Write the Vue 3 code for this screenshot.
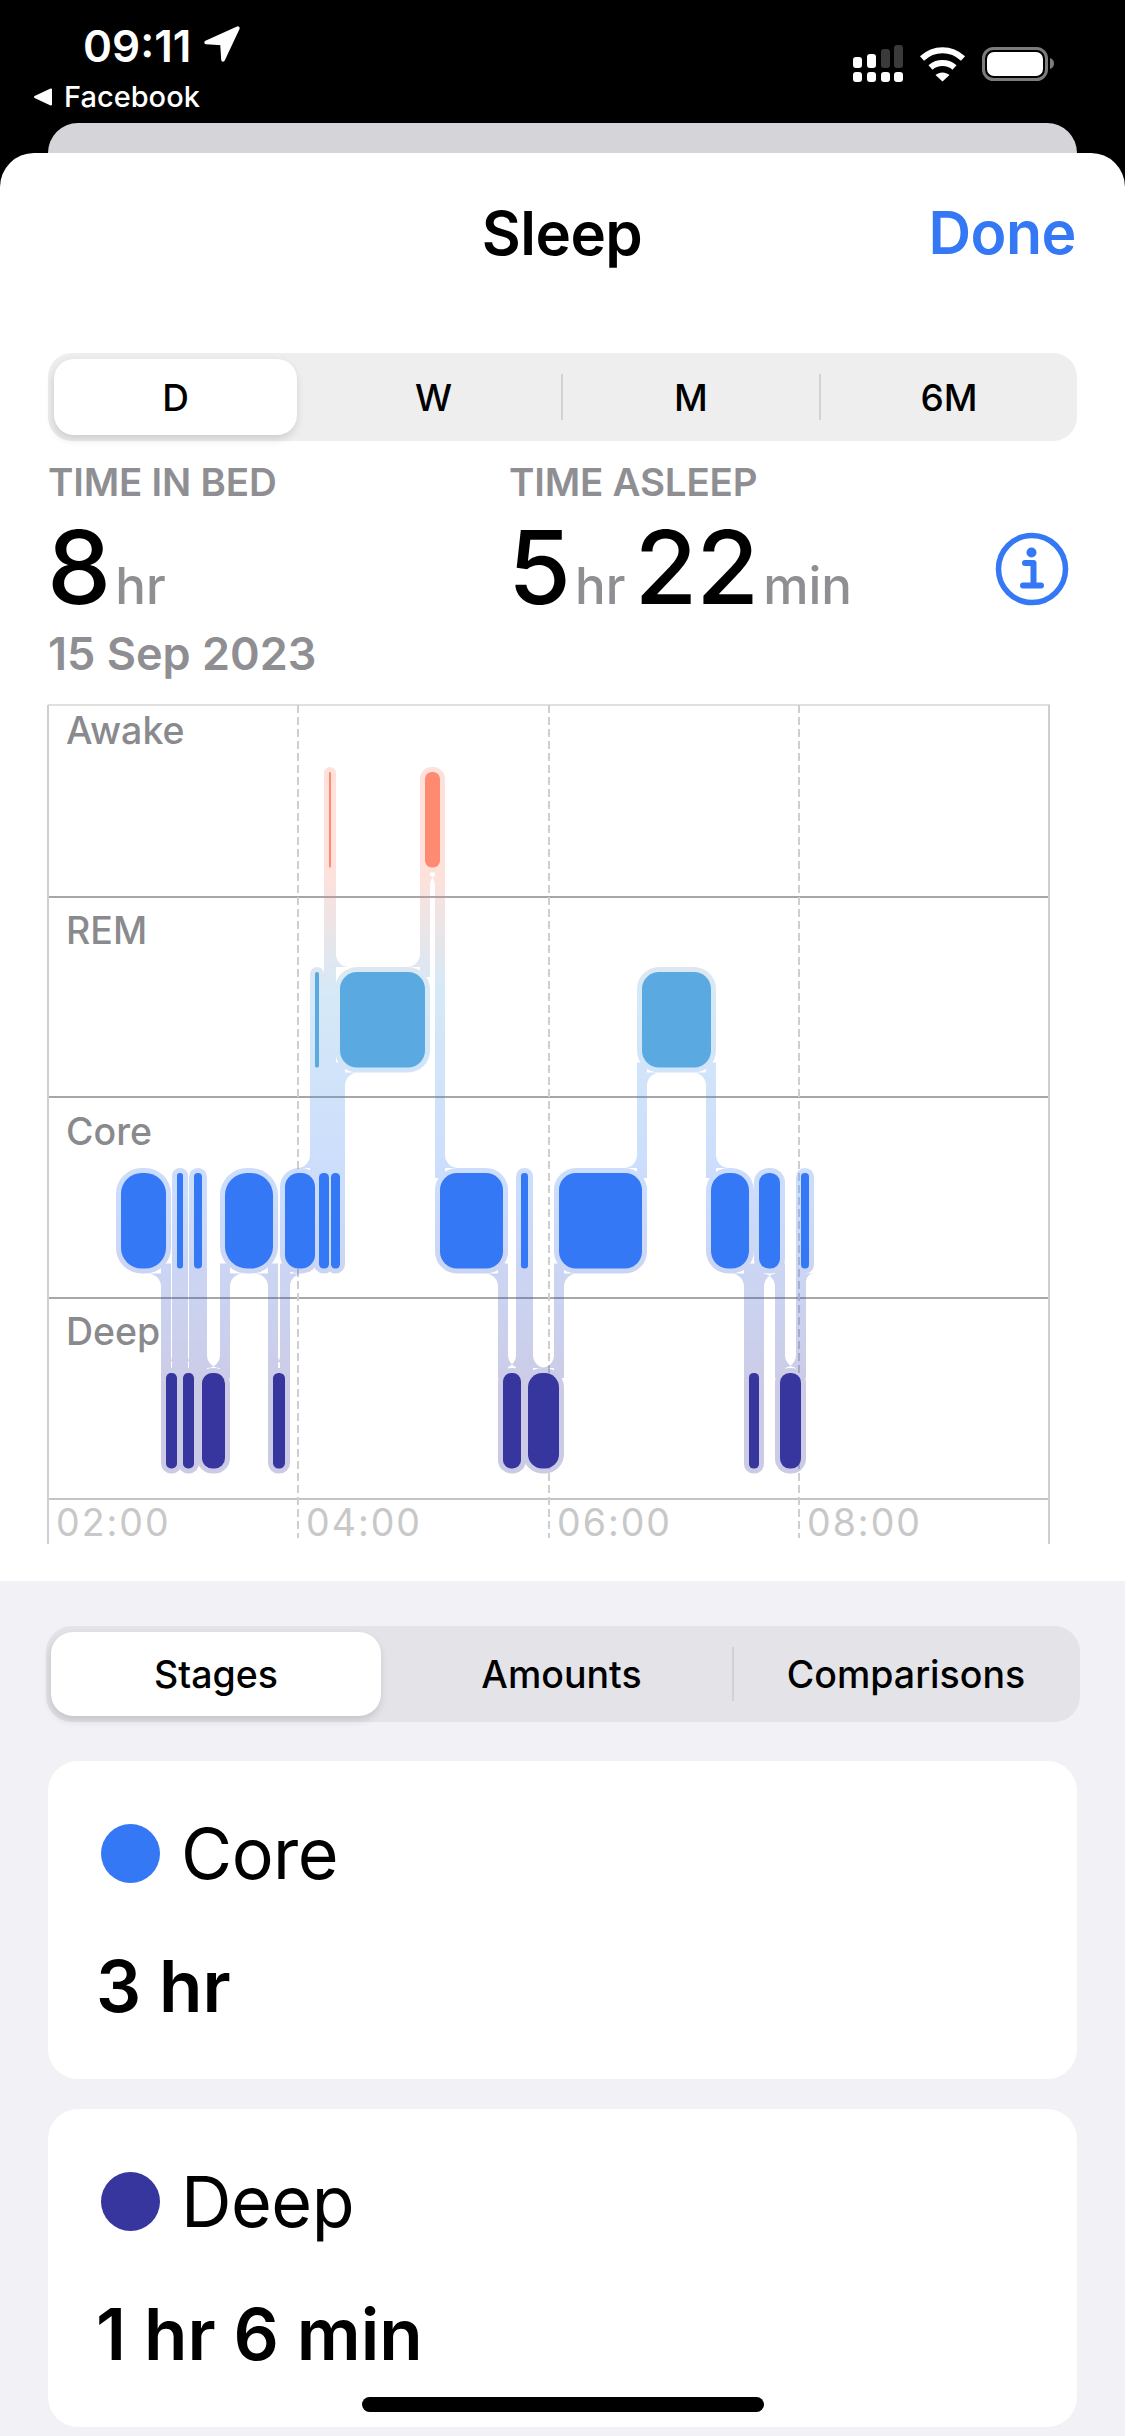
<script setup>
const tops = [772, 972, 1173, 1373]
const H = 95.5
const fills = ['#ff8a72', '#5aaae1', '#3478f6', '#37359e']
const raw = [
  [121,166,2],[166,177,3],[177,183,2],[183,194,3],[194,202,2],[202,225,3],[225,273,2],[273,285,3],
  [285,315,2],[315,319,1],[319,329,2],[329,331,0],[331,340,2],[340,425,1],[425,440,0],[440,503,2],
  [503,521,3],[521,528,2],[528,559,3],[559,642,2],[642,711,1],[711,749,2],[749,759,3],[759,780,2],
  [780,801,3],[801,809,2]
]
const bars = raw.map(([a, b, s]) => {
  const w = b - a
  const r = w < 60 ? (w / 2) * 0.92 : 17
  return { x: a, w, s, y: tops[s], r, fill: fills[s] }
})
const halos = bars.map(b => ({ x: b.x - 5, y: b.y - 5, w: b.w + 10, h: H + 10, r: b.r + 5 }))
const connectors = []
const fillets = []
for (let i = 0; i < raw.length - 1; i++) {
  const [a0, x, s0] = raw[i]
  const [, b1, s1] = raw[i + 1]
  const down = s0 > s1 ? false : true
  const up = Math.min(s0, s1)
  const lo = Math.max(s0, s1)
  const uB = tops[up] + H + 5
  const lT = tops[lo] - 5
  connectors.push({ x: x - 5, y: uB - 10, h: lT - uB + 20 })
  const rL = Math.min(13, x - a0)
  const rR = Math.min(13, b1 - x)
  const L = x - 5
  const R = x + 5
  if (down) {
    fillets.push(`M${L} ${uB}L${L - rL} ${uB}A${rL} ${rL} 0 0 1 ${L} ${uB + rL}Z`)
    fillets.push(`M${R} ${lT}L${R + rR} ${lT}A${rR} ${rR} 0 0 1 ${R} ${lT - rR}Z`)
  } else {
    fillets.push(`M${L} ${lT}L${L - rL} ${lT}A${rL} ${rL} 0 0 0 ${L} ${lT - rL}Z`)
    fillets.push(`M${R} ${uB}L${R + rR} ${uB}A${rR} ${rR} 0 0 0 ${R} ${uB + rR}Z`)
  }
}
fillets.push('M336 967L349 967A13 13 0 0 1 336 954Z')
const filletPath = fillets.join('')
const rows = [
  { label: 'Awake', y: 744 },
  { label: 'REM', y: 944 },
  { label: 'Core', y: 1145 },
  { label: 'Deep', y: 1345 }
]
const times = [
  { label: '02:00', x: 56 },
  { label: '04:00', x: 306 },
  { label: '06:00', x: 557 },
  { label: '08:00', x: 807 }
]
const grid = [897, 1097, 1298]
const dashes = [298, 549, 799]
const cards = [
  { name: 'Core', value: '3 hr', color: '#3478f6' },
  { name: 'Deep', value: '1 hr 6 min', color: '#37359e' }
]
</script>

<template>
  <div class="phone">
    <header class="status">
      <div class="status-left">
        <div class="clock">
          <span class="time">09:11</span>
          <svg class="arrow" viewBox="0 0 36 36" width="38" height="38">
            <path d="M33 3 3 16.5 18 17.5 19 33Z" fill="#fff" stroke="#fff" stroke-width="3.5" stroke-linejoin="round" />
          </svg>
        </div>
        <div class="back">
          <svg class="tri" viewBox="0 0 20 20" width="20" height="20">
            <path d="M2 10 18 2.5V17.5Z" fill="#fff" stroke="#fff" stroke-width="2" stroke-linejoin="round" />
          </svg>
          <span>Facebook</span>
        </div>
      </div>
      <svg class="status-icons" viewBox="850 40 210 45" width="210" height="45">
        <rect x="853" y="72" width="9" height="10" rx="3" fill="#fff" />
        <rect x="867" y="72" width="9" height="10" rx="3" fill="#fff" />
        <rect x="881" y="72" width="9" height="10" rx="3" fill="#fff" />
        <rect x="894" y="72" width="9" height="10" rx="3" fill="#fff" />
        <rect x="853" y="57" width="9" height="11" rx="3" fill="#fff" />
        <rect x="867" y="54" width="9" height="14" rx="3" fill="#fff" />
        <rect x="881" y="49" width="9" height="19" rx="3" fill="#3a3a3a" />
        <rect x="894" y="45" width="9" height="23" rx="3" fill="#3a3a3a" />
        <path d="M922 58.5C934 47.5 951 47.5 963 58.5" fill="none" stroke="#fff" stroke-width="6" />
        <path d="M930.5 67.5C937 61.5 948 61.5 954.500 67.500" fill="none" stroke="#fff" stroke-width="6" />
        <path d="M935.500 75C939.500 71.500 945.500 71.500 949.500 75L942.500 81.500Z" fill="#fff" />
        <rect x="983.500" y="48.500" width="63" height="31" rx="10" fill="none" stroke="#7c7c7c" stroke-width="3" />
        <rect x="987" y="52" width="56" height="24" rx="7" fill="#fff" />
        <path d="M1050 58C1053 59 1054 61 1054 63.500 1054 66 1053 68 1050 69Z" fill="#7c7c7c" />
      </svg>
    </header>
    <div class="peek"></div>
    <section class="sheet">
      <div class="nav">
        <span></span>
        <h1 class="title">Sleep</h1>
        <span class="done">Done</span>
      </div>
      <div class="seg range">
        <div class="cell active">D</div>
        <div class="cell w">W</div>
        <i class="sep"></i>
        <div class="cell m">M</div>
        <i class="sep"></i>
        <div class="cell six">6M</div>
      </div>
      <div class="stats">
        <div class="stat bed">
          <div class="label">TIME IN BED</div>
          <div class="value">8<small>hr</small></div>
        </div>
        <div class="stat asleep">
          <div class="label">TIME ASLEEP</div>
          <div class="value">5<small>hr</small><b>22</b><small>min</small></div>
        </div>
        <svg class="info" viewBox="0 0 74 74" width="74" height="74">
          <circle cx="37" cy="37" r="33.500" fill="none" stroke="#3478f6" stroke-width="5.500" />
          <circle cx="36.500" cy="20.500" r="5" fill="#3478f6" />
          <path d="M30 31H38.500V52M28 53.500H46" fill="none" stroke="#3478f6" stroke-width="6" stroke-linejoin="round" stroke-linecap="round" />
        </svg>
      </div>
      <div class="date">15 Sep 2023</div>
      <svg class="chart" viewBox="0 700 1125 850" width="1125" height="850">
        <defs>
          <linearGradient id="halo" gradientUnits="userSpaceOnUse" x1="0" y1="767" x2="0" y2="1474">
            <stop offset="0.15" stop-color="#ff8a72" />
            <stop offset="0.32" stop-color="#5aaae1" />
            <stop offset="0.6" stop-color="#3478f6" />
            <stop offset="0.88" stop-color="#37359e" />
          </linearGradient>
        </defs>
        <line x1="48" y1="705" x2="1050" y2="705" stroke="#e0e0e0" stroke-width="2" />
        <line x1="48" y1="1499" x2="1050" y2="1499" stroke="#c4c4c4" stroke-width="2" />
        <line v-for="y in grid" :key="y" x1="48" :y1="y" x2="1050" :y2="y" stroke="#8a8a8a" stroke-width="1.500" />
        <line x1="48" y1="705" x2="48" y2="1544" stroke="#cfcfcf" stroke-width="2" />
        <line x1="1049" y1="705" x2="1049" y2="1544" stroke="#cfcfcf" stroke-width="2" />
        <line
          v-for="x in dashes"
          :key="x"
          :x1="x"
          y1="705"
          :x2="x"
          y2="1538"
          stroke="#cfcfcf"
          stroke-width="2"
          stroke-dasharray="8 4"
        />
        <g opacity="0.25" fill="url(#halo)">
          <rect v-for="(h, i) in halos" :key="'h' + i" :x="h.x" :y="h.y" :width="h.w" :height="h.h" :rx="h.r" />
          <rect v-for="(c, i) in connectors" :key="'c' + i" :x="c.x" :y="c.y" width="10" :height="c.h" />
          <path :d="filletPath" />
        </g>
        <rect
          v-for="(b, i) in bars"
          :key="'b' + i"
          :x="b.x"
          :y="b.y"
          :width="b.w"
          :height="H"
          :rx="b.r"
          :fill="b.fill"
        />
        <text v-for="r in rows" :key="r.label" class="row-label" x="66" :y="r.y">{{ r.label }}</text>
        <text v-for="t in times" :key="t.label" class="time-label" :x="t.x" y="1536">{{ t.label }}</text>
      </svg>
    </section>
    <section class="lower">
      <div class="seg tabs">
        <div class="cell active">Stages</div>
        <div class="cell a">Amounts</div>
        <i class="sep"></i>
        <div class="cell c">Comparisons</div>
      </div>
      <article v-for="c in cards" :key="c.name" class="card">
        <div class="card-head">
          <span class="dot" :style="{ background: c.color }"></span>
          <span class="name">{{ c.name }}</span>
        </div>
        <div class="amount">{{ c.value }}</div>
      </article>
    </section>
    <div class="home"></div>
  </div>
</template>

<style>
html, body { margin: 0; background: #000; }
</style>

<style scoped>
.phone {
  position: relative;
  width: 1125px;
  height: 2436px;
  overflow: hidden;
  background: #000;
  display: flex;
  flex-direction: column;
  font-family: Inter, "Liberation Sans", sans-serif;
  color: #000;
}
.status {
  height: 123px;
  flex: none;
  display: flex;
  justify-content: space-between;
  color: #fff;
}
.status-left { padding: 21px 0 0 33px; }
.clock { display: flex; align-items: center; margin-left: 50px; height: 50px; }
.time { font-size: 44px; line-height: 50px; font-weight: 600; }
.arrow { margin-left: 12px; margin-top: -5px; }
.back { display: flex; align-items: center; margin-top: 8px; font-size: 29px; line-height: 36px; font-weight: 500; }
.tri { margin-right: 11px; }
.status-icons { margin: 40px 65px 0 0; }
.peek {
  height: 30px;
  flex: none;
  margin: 0 48px;
  background: #d5d5d9;
  border-radius: 30px 30px 0 0;
}
.sheet {
  height: 1428px;
  flex: none;
  background: #fff;
  border-radius: 34px 34px 0 0;
  box-sizing: border-box;
}
.nav {
  display: grid;
  grid-template-columns: 1fr auto 1fr;
  align-items: center;
  padding: 40px 49px 80px 48px;
  height: 200px;
  box-sizing: border-box;
}
.title { margin: 0; font-size: 60px; line-height: 80px; font-weight: 600; letter-spacing: -0.5px; }
.done { justify-self: end; font-size: 59px; line-height: 80px; font-weight: 600; color: #3478f6; letter-spacing: -0.5px; }
.seg { display: flex; align-items: center; box-sizing: border-box; padding: 6px; }
.cell { display: flex; align-items: center; justify-content: center; height: 100%; box-sizing: border-box; font-weight: 500; }
.active { background: #fff; box-shadow: -1px 4px 8px rgba(0, 0, 0, 0.14); }
.sep { display: block; flex: none; width: 2px; background: #d2d2d4; }
.range {
  height: 88px;
  margin: 0 48px;
  background: #eeeeee;
  border-radius: 24px;
  font-size: 37px;
}
.range .active { width: 243px; border-radius: 20px; }
.range .w { width: 264px; padding-left: 9px; }
.range .m { width: 256px; }
.range .six { width: 250px; padding-left: 6px; }
.range .sep { height: 46px; }
.stats {
  display: flex;
  align-items: flex-end;
  padding: 21px 0 0 47px;
}
.stat { flex: none; }
.bed { width: 461px; }
.asleep { width: 449px; }
.label { font-size: 38.500px; line-height: 40px; font-weight: 600; color: #8e8e93; margin-left: 1px; letter-spacing: -0.2px; }
.value { margin-top: 15px; font-size: 102px; line-height: 100px; font-weight: 500; letter-spacing: -1px; }
.value small { font-size: 51px; line-height: 50px; color: #8e8e93; margin-left: 5px; letter-spacing: 0; }
.value b { font-weight: 500; margin-left: 9px; }
.info { margin: 0 0 11px 38px; }
.date { margin: 12px 0 0 48px; font-size: 45px; line-height: 50px; font-weight: 600; color: #8e8e93; }
.chart { display: block; margin-top: 21px; }
.row-label { font-size: 37.500px; font-weight: 500; fill: #8a8a8e; font-family: Inter, sans-serif; }
.time-label { font-size: 37.500px; font-weight: 400; fill: #c8c8c8; letter-spacing: 2px; font-family: Inter, sans-serif; }
.lower {
  flex: 1;
  background: #f1f1f6;
  padding-top: 45px;
}
.tabs {
  height: 96px;
  margin: 0 45px 39px 46px;
  background: #e3e3e8;
  border-radius: 26px;
  padding-left: 5px;
  font-size: 37.500px;
}
.tabs .active { width: 330px; border-radius: 22px; }
.tabs .a { width: 351px; padding-left: 10px; }
.tabs .c { width: 340px; padding-left: 4px; }
.tabs .sep { height: 54px; }
.card {
  height: 318px;
  margin: 0 48px 30px;
  background: #fff;
  border-radius: 30px;
  box-sizing: border-box;
  padding: 63px 50px 0 53px;
}
.card-head { display: flex; align-items: center; height: 59px; }
.dot { width: 59px; height: 59px; border-radius: 50%; flex: none; }
.name { margin-left: 21px; font-size: 70px; line-height: 80px; font-weight: 400; letter-spacing: -0.5px; }
.amount { margin: 63px 0 0 -5px; font-size: 71px; line-height: 80px; font-weight: 600; }
.home {
  position: absolute;
  left: 362px;
  top: 2397px;
  width: 402px;
  height: 15px;
  border-radius: 8px;
  background: #000;
}
</style>
